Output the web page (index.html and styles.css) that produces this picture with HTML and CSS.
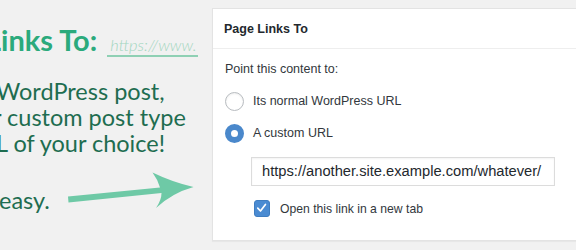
FILE: index.html
```html
<!DOCTYPE html>
<html lang="en">

<head>
    <meta charset="UTF-8">
    <meta name="viewport" content="width=device-width, initial-scale=1.0">
    <title>Page Links To</title>
    <link rel="stylesheet" href="styles.css">
</head>

<body>
    <div class="page">
        <!-- left: banner text -->
        <div class="promo">
            <div class="promo-title">
                <span class="title-main">Links To:</span>
                <span class="title-url">https://www.</span>
            </div>
            <div class="promo-text">
                <div class="line line-1">WordPress post,</div>
                <div class="line line-2">r custom post type</div>
                <div class="line line-3">L of your choice!</div>
                <div class="line line-4">easy.</div>
            </div>
            <svg class="arrow" width="140" height="50" viewBox="60 165 140 50">
                <path d="M68 196.5 L160 187.5 Q158 180 152.5 172.5 Q172 182 193.5 187 Q172 193 156 208 Q161.5 200 161.5 193 L68.5 202.5 Z" fill="#6ec9a6" />
            </svg>
        </div>

        <!-- right: meta box -->
        <div class="postbox">
            <div class="postbox-head">Page Links To</div>
            <div class="postbox-body">
                <div class="label">Point this content to:</div>
                <label class="option">
                    <span class="radio"></span>
                    <span>Its normal WordPress URL</span>
                </label>
                <label class="option">
                    <span class="radio checked"></span>
                    <span>A custom URL</span>
                </label>
                <div class="url-field">https://another.site.example.com/whatever/</div>
                <label class="check-row">
                    <span class="checkbox">
                        <svg width="16" height="16" viewBox="0 0 16 16">
                            <path d="M4 8.2 L6.9 11.2 L12.2 4.2" fill="none" stroke="#fff" stroke-width="1.8" stroke-linecap="round" stroke-linejoin="round" />
                        </svg>
                    </span>
                    <span>Open this link in a new tab</span>
                </label>
            </div>
        </div>
    </div>
</body>

</html>
```

FILE: styles.css
```css
* {
    padding: 0;
    margin: 0;
    box-sizing: border-box;
}

body {
    width: 576px;
    height: 250px;
    overflow: hidden;
    background: #f1f1f1;
}

.page {
    display: flex;
    height: 250px;
}

/* left banner */
.promo {
    width: 212px;
    flex-shrink: 0;
    overflow: hidden;
    position: relative;
    font-family: Lato, "Open Sans", sans-serif;
}

.promo-title {
    display: flex;
    align-items: baseline;
    margin-top: 22px;
    margin-left: -14px;
    white-space: nowrap;
}

.title-main {
    font-size: 29px;
    font-weight: 700;
    color: #2baa7c;
}

.title-url {
    margin-left: 10px;
    padding: 0 2px 0 3px;
    font-size: 16.5px;
    font-style: italic;
    font-weight: 300;
    color: #a3d6c0;
    border-bottom: 2px solid #8fd0b4;
    line-height: 20px;
}

.promo-text {
    margin-top: 21px;
    font-size: 23.5px;
    line-height: 26px;
    color: #1e6d50;
    white-space: nowrap;
}

.line-1 {
    margin-left: -4px;
}

.line-2 {
    margin-left: -7px;
}

.line-3 {
    margin-left: -4px;
}

.line-4 {
    margin-top: 31px;
    margin-left: -1px;
}

.arrow {
    position: absolute;
    left: 60px;
    top: 165px;
}

/* right meta box */
.postbox {
    flex: 1;
    margin: 8px -20px 9px 0;
    background: #fff;
    border: 1px solid #e3e3e3;
    box-shadow: 0 1px 1px rgba(0, 0, 0, .04);
    font-family: "Liberation Sans", Arial, sans-serif;
    color: #32373c;
}

.postbox-head {
    height: 40px;
    padding-left: 11px;
    border-bottom: 1px solid #eeeeee;
    font-size: 12.5px;
    font-weight: 700;
    line-height: 40px;
    color: #23282d;
}

.postbox-body {
    padding: 10px 0 0 12px;
    font-size: 12.5px;
}

.label {
    line-height: 20px;
}

.option {
    display: flex;
    align-items: center;
    gap: 9px;
    height: 32px;
}

.option:first-of-type {
    margin-top: 6px;
}

.radio {
    width: 19px;
    height: 19px;
    border-radius: 50%;
    border: 1px solid #b8bcc0;
    background: #fff;
    box-shadow: inset 0 1px 2px rgba(0, 0, 0, .07);
}

.radio.checked {
    border: 6px solid #4a88cb;
    background: #fff;
    box-shadow: none;
}

.url-field {
    width: 304px;
    height: 29px;
    margin: 8px 0 0 26px;
    padding-left: 10px;
    border: 1px solid #dcdcdc;
    box-shadow: inset 0 1px 2px rgba(0, 0, 0, .05);
    font-size: 14.7px;
    line-height: 27px;
    color: #23282d;
}

.check-row {
    display: flex;
    align-items: center;
    gap: 10px;
    height: 17px;
    margin: 14px 0 0 29px;
    font-size: 12.2px;
}

.checkbox {
    display: flex;
    width: 16px;
    height: 17px;
    border-radius: 3px;
    background: #4a8bd2;
    border: 1px solid #3f7dc0;
}

.checkbox svg {
    margin: -1px 0 0 -1px;
}
```
